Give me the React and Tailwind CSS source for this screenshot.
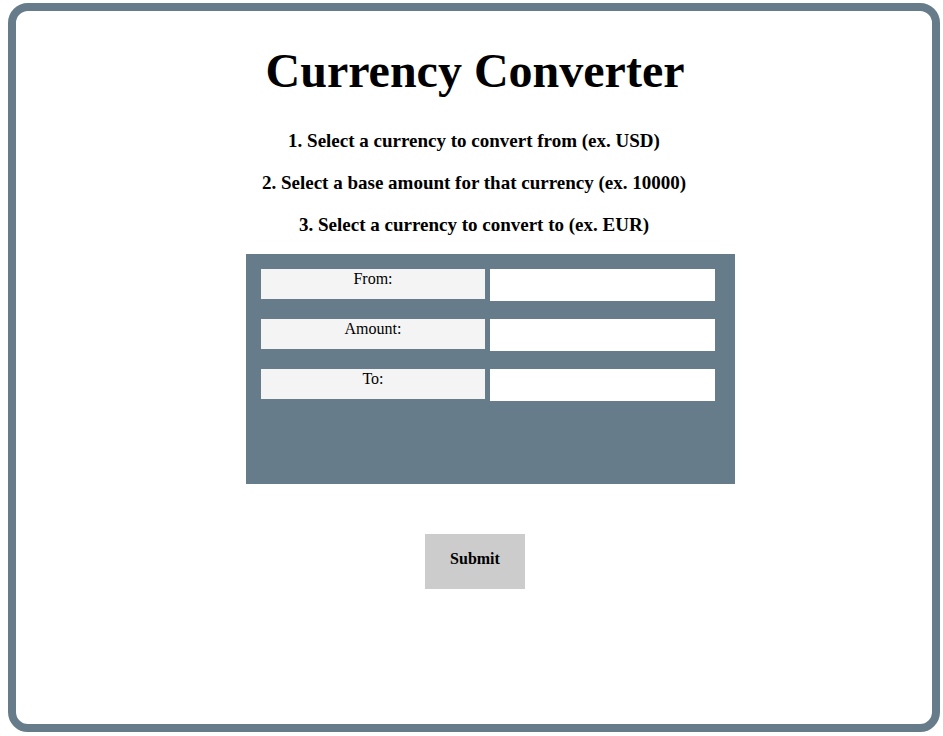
import React from 'react';

const serif = { fontFamily: '"Liberation Serif", "Times New Roman", serif' };

function FieldRow({ label }) {
  return (
    <div className="flex items-start gap-[5px]">
      <div className="w-[224px] h-[30px] bg-[#f4f4f4] text-center text-[16px] leading-[18px] pt-[1px] text-black">
        {label}
      </div>
      <input
        type="text"
        className="w-[225px] h-[32px] bg-white border-0 outline-none px-1 text-[16px]"
      />
    </div>
  );
}

export default function App() {
  return (
    <div className="min-h-screen bg-white pt-[3px] pl-[8px]" style={serif}>
      <div className="w-[932px] h-[729px] border-[8px] border-[#667c8a] rounded-[20px] bg-white flex flex-col">
        {/* Title */}
        <h1 className="mt-[32px] pl-[2px] text-center text-[48px] leading-[55px] font-bold text-black">
          Currency Converter
        </h1>

        {/* Instructions */}
        <div className="mt-[32px] flex flex-col gap-[20px] text-center text-[19px] leading-[22px] font-bold text-black">
          <p>1. Select a currency to convert from (ex. USD)</p>
          <p>2. Select a base amount for that currency (ex. 10000)</p>
          <p>3. Select a currency to convert to (ex. EUR)</p>
        </div>

        {/* Form panel */}
        <div className="mt-[18px] ml-[230px] w-[489px] h-[230px] bg-[#667c8a] pt-[15px] pl-[15px] flex flex-col gap-[18px]">
          <FieldRow label="From:" />
          <FieldRow label="Amount:" />
          <FieldRow label="To:" />
        </div>

        {/* Submit */}
        <div className="mt-[50px] flex justify-center pl-[2px]">
          <button className="w-[100px] h-[55px] pb-[6px] bg-[#cccccc] text-[16px] font-bold text-black" style={serif}>
            Submit
          </button>
        </div>
      </div>
    </div>
  );
}
